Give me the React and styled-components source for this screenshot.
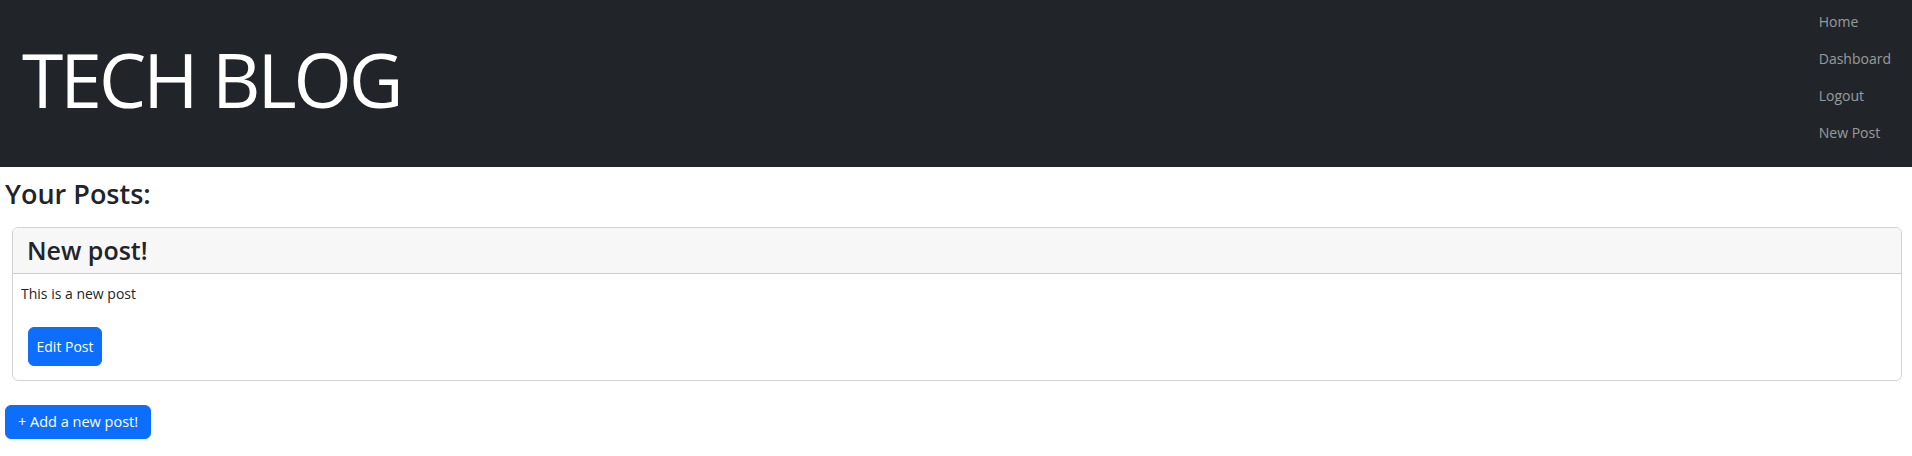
import React from "react";
import styled, { createGlobalStyle } from "styled-components";

const GlobalStyle = createGlobalStyle`
  html, body { margin: 0; padding: 0; background: #fff; }
  body {
    font-family: "Open Sans", "Noto Sans", sans-serif;
    color: #212529;
    font-size: 14px;
    line-height: 1.5;
  }
  * { box-sizing: border-box; }
`;

const Header = styled.header`
  display: flex;
  justify-content: space-between;
  align-items: stretch;
  height: 167px;
  background: #212529;
  padding: 0 21px 0 22px;
`;

const Title = styled.h1`
  margin: 0;
  align-self: center;
  color: #fff;
  font-size: 75px;
  font-weight: 400;
  line-height: 90px;
  letter-spacing: -3px;
  padding-bottom: 9px;
`;

const Nav = styled.nav`
  display: flex;
  flex-direction: column;
  padding-top: 3px;
`;

const NavLink = styled.a`
  display: block;
  color: rgba(255, 255, 255, 0.55);
  font-size: 14px;
  line-height: 21px;
  padding: 8px 0;
  text-decoration: none;
  cursor: pointer;
`;

const Main = styled.main`
  display: flex;
  flex-direction: column;
  align-items: flex-start;
  padding: 0 10px 20px 5px;
`;

const SectionTitle = styled.h2`
  margin: 10px 0 16px;
  font-size: 27px;
  font-weight: 600;
  line-height: 34px;
`;

const Card = styled.section`
  align-self: stretch;
  margin-left: 7px;
  border: 1px solid rgba(0, 0, 0, 0.175);
  border-radius: 6px;
  overflow: hidden;
`;

const CardHeader = styled.div`
  background: #f7f7f7;
  border-bottom: 1px solid rgba(0, 0, 0, 0.175);
  padding: 7px 14px;
`;

const CardTitle = styled.h3`
  margin: 0;
  font-size: 25px;
  font-weight: 600;
  line-height: 31px;
`;

const CardBody = styled.div`
  display: flex;
  flex-direction: column;
  align-items: flex-start;
  padding: 9px 8px 14px;
`;

const CardText = styled.p`
  margin: 0 0 23px;
  font-size: 14px;
  line-height: 21px;
`;

const Button = styled.button`
  display: inline-block;
  background: #0d6efd;
  color: #fff;
  border: 1px solid #0d6efd;
  border-radius: 6px;
  font-family: inherit;
  font-size: ${(p) => (p.$compact ? "14.5px" : "14px")};
  line-height: ${(p) => (p.$compact ? "22px" : "21px")};
  padding: ${(p) => (p.$compact ? "5px 12px" : "8px 7.5px")};
  cursor: pointer;
`;

const EditButton = styled(Button)`
  margin-left: 7px;
`;

const AddButton = styled(Button)`
  margin-top: 24px;
`;

export default function App() {
  return (
    <>
      <GlobalStyle />
      <Header>
        <Title>TECH BLOG</Title>
        <Nav>
          <NavLink>Home</NavLink>
          <NavLink>Dashboard</NavLink>
          <NavLink>Logout</NavLink>
          <NavLink>New Post</NavLink>
        </Nav>
      </Header>
      <Main>
        <SectionTitle>Your Posts:</SectionTitle>
        <Card>
          <CardHeader>
            <CardTitle>New post!</CardTitle>
          </CardHeader>
          <CardBody>
            <CardText>This is a new post</CardText>
            <EditButton>Edit Post</EditButton>
          </CardBody>
        </Card>
        <AddButton $compact>+ Add a new post!</AddButton>
      </Main>
    </>
  );
}
